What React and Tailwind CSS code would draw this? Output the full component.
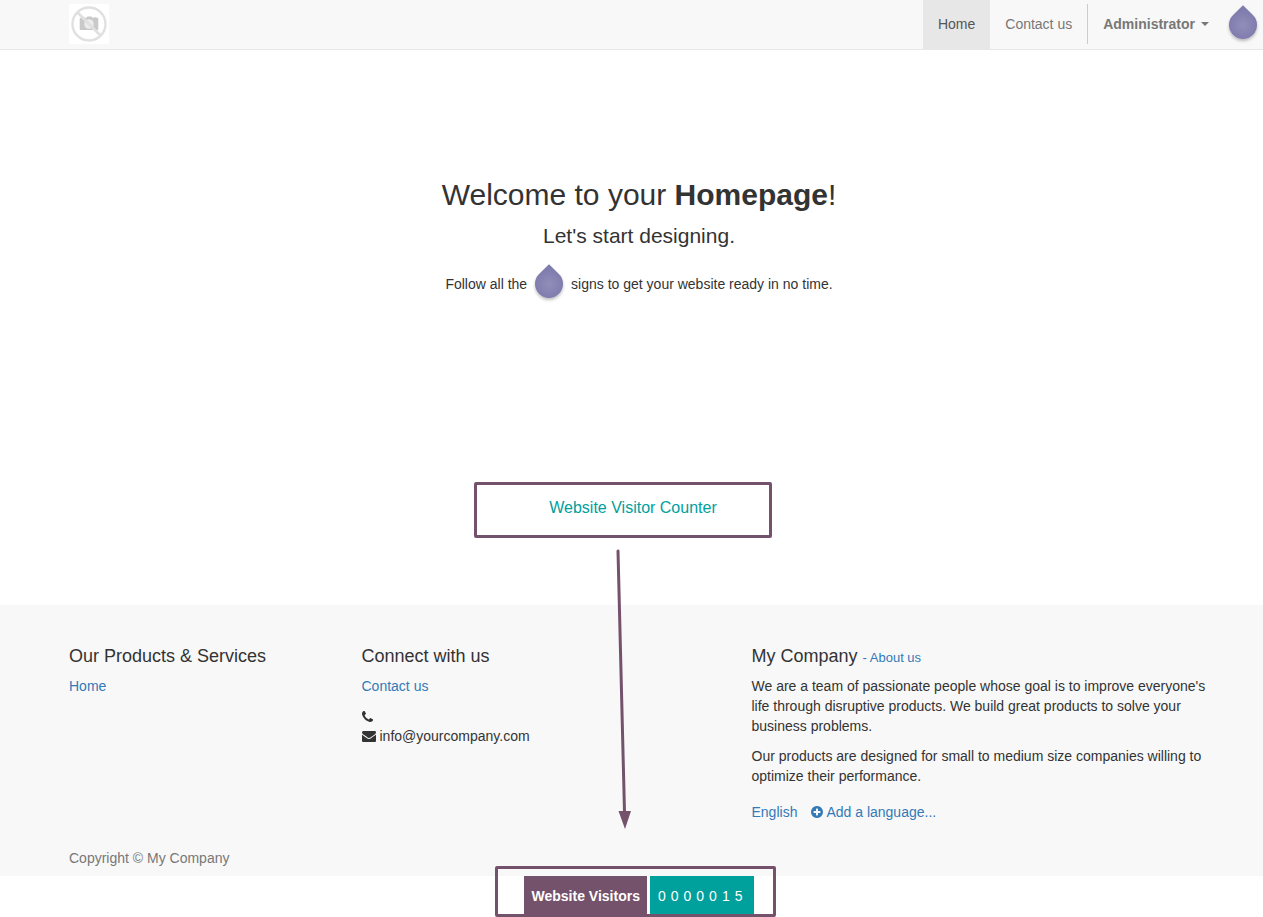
import React from "react";

function Drop({ id, className }) {
  return (
    <svg className={className} width="36" height="40" viewBox="-4 0 36 40" aria-hidden="true">
      <defs>
        <radialGradient id={id} gradientUnits="userSpaceOnUse" cx="14" cy="20" r="15">
          <stop offset="0" stopColor="#918eb9" />
          <stop offset="1" stopColor="#7f7cae" />
        </radialGradient>
        <filter id={id + "-shadow"} x="-20%" y="-20%" width="140%" height="150%">
          <feDropShadow dx="0" dy="2" stdDeviation="1.5" floodColor="#000" floodOpacity="0.25" />
        </filter>
      </defs>
      <path
        d="M14 0.2L23.4 9.6A14 14 0 1 1 4.6 9.6Z"
        fill={"url(#" + id + ")"}
        filter={"url(#" + id + "-shadow)"}
      />
    </svg>
  );
}

function Logo() {
  return (
    <svg width="40" height="40" viewBox="0 0 40 40" role="img" aria-label="My Company">
      <rect width="40" height="40" fill="#fff" />
      <path d="M11.5 14h3v-.8h1.5v.8h1l1.5-1.5h4L24 14h.8v-.8h3v.8h.7q.8 0 .8.8v10.4q0 .8-.8.8h-17q-.8 0-.8-.8V14.800q0-.8.8-.8z" fill="#c9c9c9" />
      <circle cx="20" cy="20" r="4.8" fill="#ececec" />
      <path d="M8.500 8.500L31.500 31.500" stroke="#e0e0e0" strokeWidth="2.600" />
      <circle cx="20" cy="20" r="16.500" fill="none" stroke="#e0e0e0" strokeWidth="2.400" />
    </svg>
  );
}

function PhoneIcon() {
  return (
    <svg width="11" height="11" viewBox="192 128 1408 1408" fill="currentColor" role="img" aria-label="Phone">
      <path d="M1600 1240q0 27-10 70.5t-21 68.5q-21 50-122 106-94 51-186 51-27 0-53-3.5t-57.5-12.5-47-14.5-55.5-20.5-49-18q-98-35-175-83-127-79-264-216t-216-264q-48-77-83-175-3-9-18-49t-20.5-55.5-14.5-47-12.5-57.5-3.5-53q0-92 51-186 56-101 106-122 25-11 68.5-21t70.5-10q14 0 21 3 18 6 53 76 11 19 30 54t35 63.5 31 53.5q3 4 17.5 25t21.5 35.5 7 28.5q0 20-28.5 50t-62 55-62 53-28.5 46q0 9 5 22.5t8.5 20.5 14 24 11.5 19q76 137 174 235t235 174q2 1 19 11.5t24 14 20.5 8.5 22.5 5q18 0 46-28.5t53-62 55-62 50-28.5q14 0 28.5 7t35.5 21.5 25 17.5q25 15 53.5 31t63.5 35 54 30q70 35 76 53 3 7 3 21z" />
    </svg>
  );
}

function EnvelopeIcon() {
  return (
    <svg width="14" height="14" viewBox="0 0 1792 1792" fill="currentColor" role="img" aria-label="Email">
      <path d="M1792 710v794q0 66-47 113t-113 47h-1472q-66 0-113-47t-47-113v-794q44 49 101 87 362 246 497 345 57 42 92.5 65.5t94.5 48 110 24.5h2q51 0 110-24.5t94.5-48 92.5-65.5q170-123 498-345 57-39 100-87zm0-294q0 79-49 151t-122 123q-376 261-468 325-10 7-42.5 31t-54 38.5-52 32.5-57.5 27-50 9h-2q-23 0-50-9t-57.5-27-52-32.5-54-38.5-42.5-31q-91-64-262-182.5t-205-142.5q-62-42-117-115.5t-55-136.5q0-78 41.5-130t118.5-52h1472q65 0 112.5 47t47.5 113z" />
    </svg>
  );
}

function PlusCircleIcon() {
  return (
    <svg width="12" height="12" viewBox="128 128 1536 1536" fill="currentColor" aria-hidden="true">
      <path d="M1344 960v-128q0-26-19-45t-45-19h-256v-256q0-26-19-45t-45-19h-128q-26 0-45 19t-19 45v256h-256q-26 0-45 19t-19 45v128q0 26 19 45t45 19h256v256q0 26 19 45t45 19h128q26 0 45-19t19-45v-256h256q26 0 45-19t19-45zm320-64q0 209-103 385.5t-279.5 279.5-385.5 103-385.5-103-279.5-279.5-103-385.5 103-385.5 279.5-279.5 385.5-103 385.5 103 279.5 279.5 103 385.5z" />
    </svg>
  );
}

function Header() {
  return (
    <header className="relative border-b border-[#e7e7e7] bg-[#f8f8f8]">
      <div className="flex items-start justify-between pr-[39px] pl-[69px]">
        <a href="#home" className="pt-1">
          <Logo />
        </a>
        <nav className="flex items-start text-[#777]">
          <a href="#home" className="bg-[#e7e7e7] px-[15px] pt-[14px] pb-[15px] text-[#555]">Home</a>
          <a href="#contact" className="px-[15px] pt-[14px] pb-[15px]">Contact us</a>
          <button type="button" className="mt-1 flex h-10 items-center gap-[6px] border-l border-[#ccc] px-[15px] font-bold">
            Administrator
            <svg width="8" height="4" viewBox="0 0 8 4" fill="currentColor" aria-hidden="true">
              <path d="M0 0h8L4 4z" />
            </svg>
          </button>
        </nav>
      </div>
      <Drop id="drop-nav" className="absolute top-[5px] right-[2px]" />
    </header>
  );
}

function Hero() {
  return (
    <section className="pt-32 pl-[15px] text-center">
      <h2 className="text-[30px] leading-[34px]">
        Welcome to your <strong>Homepage</strong>!
      </h2>
      <p className="mt-2 text-[21px] leading-8">Let's start designing.</p>
      <p className="mt-3 flex items-center justify-center gap-1">
        Follow all the
        <Drop id="drop-hero" />
        signs to get your website ready in no time.
      </p>
    </section>
  );
}

function Arrow() {
  return (
    <svg
      className="absolute top-[548px] left-1/2 -ml-4"
      width="18"
      height="282"
      viewBox="0 0 18 282"
      aria-hidden="true"
    >
      <path d="M2 3L8.5 264" stroke="#75526b" strokeWidth="3" strokeLinecap="round" />
      <path d="M2.5 263h12.5L9 281z" fill="#75526b" />
    </svg>
  );
}

function Footer() {
  return (
    <footer className="bg-[#f8f8f8] pt-[41px] pb-2">
      <div className="grid grid-cols-[3fr_4fr_5fr] pr-[39px] pl-[54px]">
        <div className="px-[15px]">
          <h4 className="mb-[10px] text-lg leading-5">Our Products &amp; Services</h4>
          <a href="#home" className="text-[#337ab7]">Home</a>
        </div>
        <div className="px-[15px]">
          <h4 className="mb-[10px] text-lg leading-5">Connect with us</h4>
          <a href="#contact" className="text-[#337ab7]">Contact us</a>
          <ul className="mt-[10px]">
            <li className="flex h-5 items-center"><PhoneIcon /></li>
            <li className="flex items-center gap-1"><EnvelopeIcon />info@yourcompany.com</li>
          </ul>
        </div>
        <div className="pl-[15px]">
          <h4 className="mb-[10px] text-lg leading-5">
            My Company{" "}
            <small className="text-[13px] leading-none">
              <a href="#about" className="text-[#337ab7]">- About us</a>
            </small>
          </h4>
          <p className="mb-[10px]">
            We are a team of passionate people whose goal is to improve everyone's life through
            disruptive products. We build great products to solve your business problems.
          </p>
          <p>
            Our products are designed for small to medium size companies willing to optimize their
            performance.
          </p>
          <div className="mt-4 flex gap-[14px] text-[#337ab7]">
            <a href="#english">English</a>
            <a href="#language" className="flex items-center gap-[3px]"><PlusCircleIcon />Add a language...</a>
          </div>
        </div>
      </div>
      <p className="mt-[26px] pl-[69px] text-[#777]">Copyright © My Company</p>
    </footer>
  );
}

function VisitorCounter() {
  return (
    <div className="flex justify-center pl-[7px]">
      <div className="relative -mt-[10px] flex w-[281px] gap-[3px] rounded-xs border-3 border-[#75526b] pt-[7px] pl-[26px]">
        <span className="bg-[#75526b] pt-[10px] pr-[7px] pb-2 pl-2 font-bold text-white">Website Visitors</span>
        <span className="flex gap-[5px] bg-[#00a09d] pt-[10px] pr-[11px] pb-2 pl-2 text-white">
          {"0000015".split("").map((digit, i) => (
            <span key={i}>{digit}</span>
          ))}
        </span>
      </div>
    </div>
  );
}

export default function App() {
  return (
    <div className="relative bg-white font-['Liberation_Sans',sans-serif] text-sm leading-5 text-[#333]">
      <Header />
      <main className="pb-[67px]">
        <Hero />
        <div className="mt-[178px] flex justify-center pr-[17px]">
          <div className="h-14 w-[298px] rounded-xs border-3 border-[#75526b] pt-[11px] pl-5 text-center text-base text-[#00a09d]">
            Website Visitor Counter
          </div>
        </div>
      </main>
      <Footer />
      <VisitorCounter />
      <Arrow />
    </div>
  );
}
